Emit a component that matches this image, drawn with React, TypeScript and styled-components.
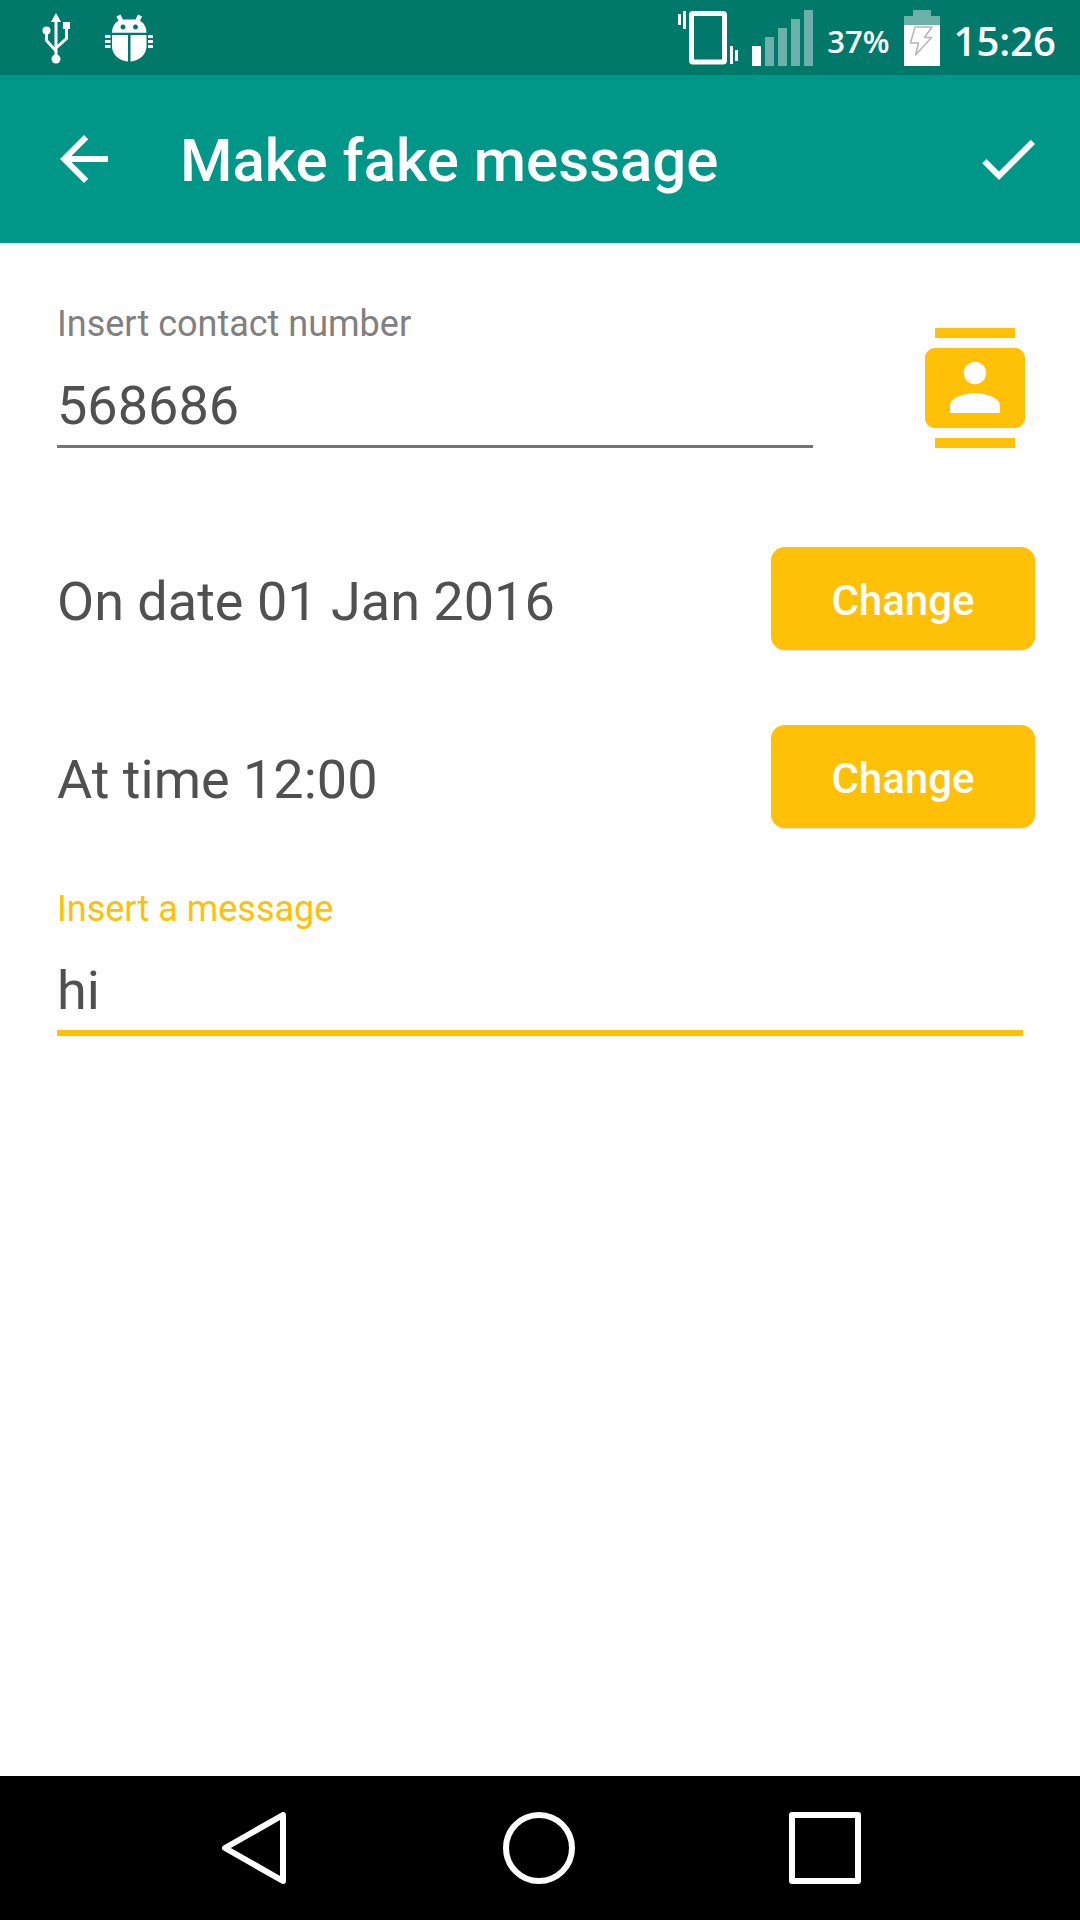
import * as React from "react";
import { useState } from "react";
import styled, { createGlobalStyle } from "styled-components";

const colors = {
	primary: "#009688",
	primaryDark: "#00796b",
	accent: "#ffc107",
	text: "#505050",
	hint: "#808080",
	line: "#757575"
};

const GlobalStyle = createGlobalStyle`
	* {
		box-sizing: border-box;
	}

	body {
		margin: 0;
		background: #fefefe;
		font-family: Roboto, "Noto Sans", sans-serif;
	}

	button,
	input {
		margin: 0;
		padding: 0;
		border: 0;
		background: none;
		font: inherit;
		color: inherit;
		outline: none;
	}

	button {
		cursor: pointer;
	}

	svg {
		display: block;
	}
`;

const Screen = styled.div`
	display: flex;
	flex-direction: column;
	min-height: 100vh;
`;

const StatusBar = styled.div`
	display: flex;
	align-items: center;
	justify-content: space-between;
	height: 75px;
	padding: 0 24px 0 42px;
	background: ${colors.primaryDark};
	color: #fff;
`;

const StatusGroup = styled.div<{ $gap: number }>`
	display: flex;
	align-items: center;
	gap: ${props => props.$gap}px;
`;

const StatusText = styled.span<{ $size: number }>`
	padding-top: 6px;
	font-family: "Open Sans", "Noto Sans", sans-serif;
	font-size: ${props => props.$size}px;
	font-weight: 600;
	line-height: 48px;
`;

const AppBar = styled.header`
	display: flex;
	align-items: center;
	gap: 60px;
	height: 168px;
	padding: 0 36px 0 48px;
	background: ${colors.primary};
	color: #fff;
`;

const Title = styled.h1`
	flex: 1 1 0;
	margin: 0;
	padding-top: 4px;
	font-size: 60px;
	font-weight: 500;
	line-height: 70px;
`;

const IconButton = styled.button`
	flex: 0 0 auto;
`;

const Form = styled.main`
	flex: 1 0 auto;
	padding: 60px 45px 60px 57px;
	color: ${colors.text};
`;

const ContactRow = styled.div`
	display: flex;
	align-items: flex-end;
	gap: 102px;
	margin-bottom: 99px;
	color: ${colors.accent};
`;

const Field = styled.div<{ $active?: boolean }>`
	flex: 1 1 0;
	display: flex;
	flex-direction: column;
	gap: 29px;

	& > label {
		color: ${props => props.$active ? colors.accent : colors.hint};
		font-size: 36px;
		line-height: 42px;
	}

	& > input {
		box-sizing: content-box;
		height: 63px;
		padding-bottom: 8px;
		border-bottom: ${props => props.$active ? `6px solid ${colors.accent}` : `3px solid ${colors.line}`};
		color: ${colors.text};
		font-size: 54px;
		line-height: 63px;
	}
`;

const MessageRow = styled.div`
	padding-right: 12px;
	margin-top: 53px;
`;

const PickerList = styled.div`
	display: flex;
	flex-direction: column;
	gap: 68px;
`;

const PickerRow = styled.div`
	display: flex;
	justify-content: space-between;
	height: 110px;
	font-size: 54px;
	line-height: 110px;
`;

const ChangeButton = styled.button`
	width: 264px;
	height: 103px;
	padding-top: 5px;
	border-radius: 14px;
	background: ${colors.accent};
	box-shadow: 0 1px 1px rgba(0, 0, 0, 0.12);
	color: #fff;
	font-size: 42px;
	font-weight: 500;
	line-height: 50px;
`;

const NavBar = styled.nav`
	display: flex;
	align-items: center;
	justify-content: space-between;
	height: 144px;
	padding: 0 219px 0 217px;
	background: #000;
	color: #fff;
`;

function UsbIcon() {
	return (
		<svg width="30" height="52" viewBox="0 0 30 52" fill="currentColor">
			<path d="M14 1l5 9h-10z" />
			<path
				d="M14 8V46M4.500 18V28.500L14 39M24.500 14V26.500L14 36"
				fill="none"
				stroke="currentColor"
				strokeWidth="3"
			/>
			<circle cx="4.500" cy="18.500" r="4" />
			<path d="M21 10h7v7h-7z" />
			<circle cx="14" cy="47" r="4.500" />
		</svg>
	);
}

function BugIcon() {
	return (
		<svg width="48" height="48" viewBox="0 0 48 48" fill="currentColor">
			<path d="M17 9L13.500 1.500M31.500 9L35 1.500" stroke="currentColor" strokeWidth="4.500" />
			<path
				fillRule="evenodd"
				d="M7 18.700C7 11 12 6.500 17 5.500H31C37 6.500 41.500 11 41.500 18.700ZM18 10.500a2.500 2.500 0 1 0 .01 0ZM30.500 10.500a2.500 2.500 0 1 0 .01 0Z"
			/>
			<path d="M7 21H23V47.500C14 46.500 7 41 7 32ZM25.500 21H41.500V32C41.500 41 34.500 46.500 25.500 47.500Z" />
			<path d="M0 21h5.500v3h-5.500zM0 26h5.500v3h-5.500zM0 31h5.500v3h-5.500zM43 21h5v3h-5zM43 26h5v3h-5zM43 31h5v3h-5z" />
		</svg>
	);
}

function VibrateIcon() {
	return (
		<svg width="60" height="54" viewBox="0 0 60 54" fill="currentColor">
			<rect x="13.500" y="2.500" width="33" height="48.500" rx="1.500" fill="none" stroke="currentColor" strokeWidth="5" />
			<path d="M0 3h3v11h-3zM5 0h3v18h-3zM52 35h3v18h-3zM57 39h3v11h-3z" />
		</svg>
	);
}

function SignalIcon() {
	return (
		<svg width="61" height="56" viewBox="0 0 61 56" fill="currentColor">
			<path d="M0 36h9v20h-9z" />
			<path d="M13 27h9v29h-9zM26 18h9v38h-9zM39 9h9v47h-9zM52 0h9v56h-9z" opacity="0.42" />
		</svg>
	);
}

function BatteryIcon() {
	return (
		<svg width="36" height="56" viewBox="0 0 36 56" fill="currentColor">
			<path d="M9 0h18v6h9v9h-36v-9h9z" opacity="0.42" />
			<path d="M0 15h36v41h-36z" />
			<path
				d="M11 17H28L20.500 27.500H27.500L11.500 45L14.500 33H6.500Z"
				fill="none"
				stroke="#b5b5b5"
				strokeWidth="1.500"
				strokeLinejoin="round"
			/>
		</svg>
	);
}

function ContactsIcon() {
	return (
		<svg width="120" height="120" viewBox="0 0 24 24" fill="currentColor">
			<path d="M20 0H4v2h16V0zM4 24h16v-2H4v2zM20 4H4c-1.100 0-2 .9-2 2v12c0 1.100.9 2 2 2h16c1.100 0 2-.9 2-2V6c0-1.100-.9-2-2-2zm-8 2.750c1.240 0 2.250 1.010 2.250 2.250s-1.010 2.250-2.250 2.250S9.750 10.240 9.750 9 10.760 6.750 12 6.750zM17 17H7v-1.500c0-1.670 3.330-2.500 5-2.500s5 .83 5 2.500V17z" />
		</svg>
	);
}

interface ActionIconProps {
	d: string;
}

function ActionIcon(props: ActionIconProps) {
	return (
		<svg width="72" height="72" viewBox="0 0 24 24" fill="currentColor">
			<path d={props.d} />
		</svg>
	);
}

interface NavIconProps {
	children: React.ReactNode;
}

function NavIcon(props: NavIconProps) {
	return (
		<svg
			width="72"
			height="72"
			viewBox="0 0 72 72"
			fill="none"
			stroke="currentColor"
			strokeWidth="6"
			strokeLinejoin="round"
		>
			{props.children}
		</svg>
	);
}

const pickers = [
	{ id: "date", label: "On date 01 Jan 2016" },
	{ id: "time", label: "At time 12:00" }
];

function App() {
	const [number, setNumber] = useState("568686");
	const [message, setMessage] = useState("hi");

	return (
		<Screen>
			<GlobalStyle />
			<StatusBar>
				<StatusGroup $gap={33}>
					<UsbIcon />
					<BugIcon />
				</StatusGroup>
				<StatusGroup $gap={14}>
					<VibrateIcon />
					<SignalIcon />
					<StatusText $size={31}>37%</StatusText>
					<BatteryIcon />
					<StatusText $size={40}>15:26</StatusText>
				</StatusGroup>
			</StatusBar>
			<AppBar>
				<IconButton type="button" aria-label="Back">
					<ActionIcon d="M20 11H7.830l5.590-5.590L12 4l-8 8 8 8 1.410-1.410L7.830 13H20v-2z" />
				</IconButton>
				<Title>Make fake message</Title>
				<IconButton type="submit" form="message-form" aria-label="Done">
					<ActionIcon d="M9 16.170L4.830 12l-1.420 1.410L9 19 21 7l-1.410-1.410z" />
				</IconButton>
			</AppBar>
			<Form>
				<form id="message-form" onSubmit={e => e.preventDefault()}>
					<ContactRow>
						<Field>
							<label htmlFor="number">Insert contact number</label>
							<input
								id="number"
								type="tel"
								value={number}
								onChange={e => setNumber(e.target.value)}
							/>
						</Field>
						<IconButton type="button" aria-label="Pick contact">
							<ContactsIcon />
						</IconButton>
					</ContactRow>
					<PickerList>
						{
							pickers.map(picker => (
								<PickerRow key={picker.id}>
									<span id={picker.id}>{picker.label}</span>
									<ChangeButton type="button" aria-describedby={picker.id}>Change</ChangeButton>
								</PickerRow>
							))
						}
					</PickerList>
					<MessageRow>
						<Field $active>
							<label htmlFor="message">Insert a message</label>
							<input
								id="message"
								type="text"
								value={message}
								onChange={e => setMessage(e.target.value)}
							/>
						</Field>
					</MessageRow>
				</form>
			</Form>
			<NavBar>
				<IconButton type="button" aria-label="Back">
					<NavIcon><path d="M66 3V69L8 36Z" /></NavIcon>
				</IconButton>
				<IconButton type="button" aria-label="Home">
					<NavIcon><circle cx="36" cy="36" r="33" /></NavIcon>
				</IconButton>
				<IconButton type="button" aria-label="Recent apps">
					<NavIcon><rect x="3" y="3" width="66" height="66" /></NavIcon>
				</IconButton>
			</NavBar>
		</Screen>
	);
}

export default App;
